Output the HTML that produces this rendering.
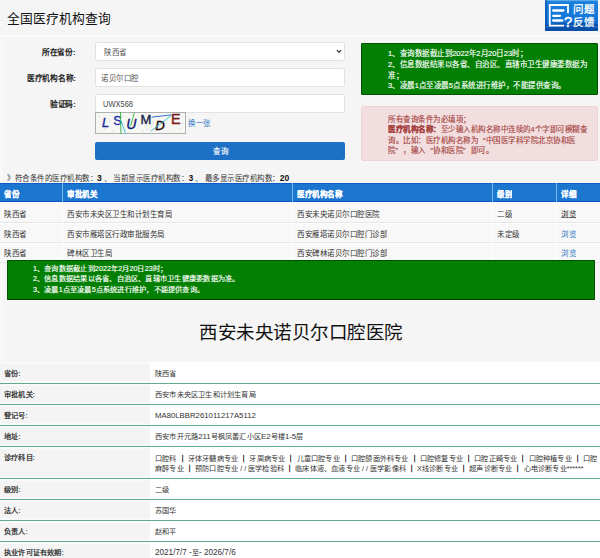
<!DOCTYPE html>
<html lang="zh-CN"><head><meta charset="utf-8">
<style>
*{box-sizing:border-box;margin:0;padding:0}
html,body{width:600px;height:558px;overflow:hidden;background:#f5f5f5;font-family:"Liberation Sans",sans-serif;color:#333}
.a{position:absolute;white-space:nowrap}
/* scaled text: 15px -> 7.5px */
.t{position:absolute;white-space:nowrap;font-size:15px;line-height:20px;transform:scale(.5);transform-origin:0 0}
.b{font-weight:bold}
.lbf{transform:scale(.515);color:#222}
.q{display:inline-block;width:15px}
#vl{left:1px;top:35px;width:1px;height:523px;background:#fdfdfd}
#hl{left:0;top:35px;width:600px;height:1px;background:#fdfdfd}
#fb{left:545px;top:0;width:53px;height:31px;background:linear-gradient(180deg,#1a80dc 0%,#1276d8 60%,#0c5cb8 100%);overflow:hidden}
.inp{position:absolute;left:95px;width:250px;height:19px;background:#fff;border:1px solid #e2e2e2;border-radius:2px}
#btn{left:95px;top:142px;width:250px;height:18px;background:#1e70c6;border-radius:2px}
.gbox{position:absolute;background:#038003;border:1px solid #025202;border-radius:1px}
#g1{left:361px;top:43px;width:237px;height:52px}
#p1{left:361px;top:106px;width:237px;height:55px;background:#f2dede;border:1px solid #eed3d7;border-radius:2px}
.w{color:#fff;-webkit-text-stroke:0.3px #fff}
.r{color:#a53f3d;-webkit-text-stroke:0.25px #a53f3d}
.th{position:absolute;top:183px;height:19px;background:#1b76d0;border-top:1px solid #0f5cc6;border-bottom:1px solid #0c52c2}
.tr{position:absolute;left:0;width:600px;height:20px;background:#f8f8f8;border-bottom:1px solid #e6e6e6;border-top:1px solid #fdfdfd}
.vd{position:absolute;width:1px;background:#fff}
.vdh{position:absolute;width:1px;background:#7fb8ec;top:183px;height:19px}
.lk{color:#2f76c4}
#g2{left:6.5px;top:260px;width:588.5px;height:40px;border-bottom:1px solid #013f01}
.row{position:absolute;left:0;width:600px;background:#fff;border-bottom:1px solid #62ab8c}
.rlb{position:absolute;left:0;width:150px;background:#f4f4f4;border-top:2px solid #f9f9f9;border-bottom:2px solid #f9f9f9}
.d{transform:scale(.48)}
.sep{color:#111;-webkit-text-stroke:0.8px #111}
.n{font-size:17px;color:#111}
.lat{font-size:16.2px}
.lb{color:#222;-webkit-text-stroke:0.45px #222}
.s2{transform:scale(.482)}
</style></head><body>
<div id="hl" class="a"></div>
<div id="vl" class="a"></div>
<div class="t" style="left:7px;top:9.5px;font-size:25.5px;line-height:34px;color:#111">全国医疗机构查询</div>
<div id="fb" class="a">
<svg width="53" height="31" viewBox="0 0 53 31" style="position:absolute;left:0;top:0">
<rect x="0" y="0" width="53" height="1.2" fill="#5aa8e8"/>
<rect x="0" y="0" width="2" height="31" fill="#0a50a8" opacity="0.6"/>
<path d="M0 25 Q22 21 53 24 L53 31 L0 31Z" fill="#0848a0" opacity="0.7"/>
<path d="M0 27 Q25 24 53 27" fill="none" stroke="#3a9ae8" stroke-width="0.8" opacity="0.7"/>
<path d="M19 25.7 L4.75 25.7 L4.75 5 L23 5 L23 13.2" fill="none" stroke="#fff" stroke-width="1.8"/>
<path d="M8.2 10.5 H18.4 M8.2 15.8 H15 M8.2 20.5 H17.2" stroke="#fff" stroke-width="2.3" stroke-linecap="round"/>
<text x="19" y="27" font-size="14.5" fill="#fff" stroke="#fff" stroke-width="0.4" font-family="Liberation Sans">?</text>
</svg>
<div class="t w" style="left:28px;top:3px;font-size:21px;line-height:24px;-webkit-text-stroke:0.6px #fff">问题</div>
<div class="t w" style="left:28px;top:16px;font-size:21px;line-height:24px;-webkit-text-stroke:0.6px #fff">反馈</div>
</div>

<div class="t b lbf" style="left:42px;top:46.5px">所在省份:</div>
<div class="t b lbf" style="left:26.5px;top:72.5px">医疗机构名称:</div>
<div class="t b lbf" style="left:50px;top:98.5px">验证码:</div>
<div class="inp" style="top:42px"><div class="t" style="left:8px;top:4px;color:#555">陕西省</div>
<svg class="a" style="left:240px;top:6px" width="6" height="5" viewBox="0 0 6 5"><path d="M0.8 1 L3 3.4 L5.2 1" fill="none" stroke="#222" stroke-width="1.1"/></svg></div>
<div class="inp" style="top:68px"><div class="t" style="left:5px;top:4px;color:#555">诺贝尔口腔</div></div>
<div class="inp" style="top:94px"><div class="t" style="left:6.5px;top:3px;color:#444;transform:scale(.5,.57)">UWX568</div></div>

<svg class="a" style="left:95px;top:112px" width="91" height="22" viewBox="0 0 91 22">
<rect x="0.5" y="0.5" width="90" height="21" fill="#f6f6f2" stroke="#b0b0b0"/>
<g fill="#9a9a9a">
<circle cx="4" cy="4" r=".45"/><circle cx="10" cy="17" r=".45"/><circle cx="22" cy="6" r=".45"/><circle cx="30" cy="18" r=".45"/><circle cx="37" cy="3" r=".45"/><circle cx="44" cy="13" r=".45"/><circle cx="52" cy="17" r=".45"/><circle cx="60" cy="4" r=".45"/><circle cx="66" cy="16" r=".45"/><circle cx="79" cy="7" r=".45"/><circle cx="86" cy="17" r=".45"/><circle cx="15" cy="9" r=".45"/><circle cx="72" cy="9" r=".45"/><circle cx="84" cy="3" r=".45"/><circle cx="6" cy="12" r=".45"/><circle cx="18" cy="19" r=".45"/><circle cx="48" cy="19" r=".45"/><circle cx="58" cy="11" r=".45"/><circle cx="88" cy="11" r=".45"/><circle cx="28" cy="4" r=".45"/>
</g>
<g font-family="Liberation Sans" stroke-width="0.35">
<text x="7" y="15.2" font-size="12.8" font-style="italic" fill="#1428a0" stroke="#1428a0">L</text>
<text x="18.3" y="12.6" font-size="12.8" fill="#1430a8" stroke="#1430a8">S</text>
<text x="31.2" y="17.1" font-size="14" font-style="italic" fill="#101e78" stroke="#101e78">U</text>
<text x="45.4" y="12.3" font-size="13" fill="#141c48" stroke="#141c48">M</text>
<text x="60.3" y="17.5" font-size="13.2" font-style="italic" fill="#1a0808" stroke="#1a0808">D</text>
<text x="76" y="12.3" font-size="14.5" fill="#7a1818" stroke="#7a1818">E</text>
</g>
<path d="M25.5 0 L25.9 22" stroke="#2fb040" stroke-width="0.9"/>
<path d="M25.9 8.5 L30.8 22" stroke="#30c0e0" stroke-width="0.9"/>
<path d="M39.4 0.5 L35.6 14" stroke="#2fb040" stroke-width="0.9"/>
<path d="M56.6 5.2 L76.6 2.8" stroke="#2860d8" stroke-width="0.9"/>
<path d="M55.8 19.2 L76.6 3.2" stroke="#30c0d8" stroke-width="0.9"/>
</svg>
<div class="t lk" style="left:188px;top:118px">换一张</div>
<div id="btn" class="a"></div>
<div class="t w" style="left:213px;top:146px">查询</div>

<div id="g1" class="gbox"></div>
<div class="t w" style="left:388px;top:48px">1、查询数据截止到2022年2月20日23时；</div>
<div class="t w" style="left:388px;top:59px">2、信息数据结果以各省、自治区、直辖市卫生健康委数据为</div>
<div class="t w" style="left:388px;top:70px">准；</div>
<div class="t w" style="left:388px;top:80px">3、凌晨1点至凌晨5点系统进行维护，不能提供查询。</div>
<div id="p1" class="a"></div>
<div class="t r" style="left:388px;top:114px">所有查询条件为必填项；</div>
<div class="t r" style="left:388px;top:124px"><b>医疗机构名称：</b>至少输入机构名称中连续的4个字即可模糊查</div>
<div class="t r" style="left:388px;top:135px">询。比如：医疗机构名称为<span class="q" style="text-align:right">“</span>中国医学科学院北京协和医</div>
<div class="t r" style="left:388px;top:145px">院<span class="q">”</span>，输入<span class="q" style="text-align:right">“</span>协和医院<span class="q">”</span>即可。</div>

<div class="t" style="left:7px;top:173px">》符合条件的医疗机构数：<b class="n">3</b> 、 当前显示医疗机构数：<b class="n">3</b> 、 最多显示医疗机构数：<b class="n">20</b></div>

<div class="th" style="left:0;width:600px"></div>
<div class="vdh" style="left:62px"></div><div class="vdh" style="left:292px"></div><div class="vdh" style="left:492px"></div><div class="vdh" style="left:556px"></div>
<div class="t b w" style="left:4px;top:188.8px">省份</div>
<div class="t b w" style="left:67px;top:188.8px">审批机关</div>
<div class="t b w" style="left:297px;top:188.8px">医疗机构名称</div>
<div class="t b w" style="left:497px;top:188.8px">级别</div>
<div class="t b w" style="left:561px;top:188.8px">详细</div>

<div class="tr" style="top:202px;height:21px"></div>
<div class="tr" style="top:223px;height:20px"></div>
<div class="tr" style="top:243px;height:20px"></div>
<div class="vd" style="left:62px;top:202px;height:60px"></div><div class="vd" style="left:292px;top:202px;height:60px"></div><div class="vd" style="left:492px;top:202px;height:60px"></div><div class="vd" style="left:556px;top:202px;height:60px"></div>
<div class="t" style="left:4px;top:208.8px">陕西省</div><div class="t" style="left:67px;top:208.8px">西安市未央区卫生和计划生育局</div><div class="t" style="left:297px;top:208.8px">西安未央诺贝尔口腔医院</div><div class="t" style="left:497px;top:208.8px">二级</div><div class="t" style="left:561px;top:208.8px;color:#222;text-decoration:underline">浏览</div>
<div class="t" style="left:4px;top:228.6px">陕西省</div><div class="t" style="left:67px;top:228.6px">西安市雁塔区行政审批服务局</div><div class="t" style="left:297px;top:228.6px">西安雁塔诺贝尔口腔门诊部</div><div class="t" style="left:497px;top:228.6px">未定级</div><div class="t lk" style="left:561px;top:228.6px">浏览</div>
<div class="t" style="left:4px;top:248px">陕西省</div><div class="t" style="left:67px;top:248px">碑林区卫生局</div><div class="t" style="left:297px;top:248px">西安碑林诺贝尔口腔门诊部</div><div class="t lk" style="left:561px;top:248px">浏览</div>

<div id="g2" class="gbox"></div>
<div class="t w s2" style="left:33px;top:264px">1、查询数据截止到2022年2月20日23时；</div>
<div class="t w s2" style="left:33px;top:274px">2、信息数据结果以各省、自治区、直辖市卫生健康委数据为准。</div>
<div class="t w s2" style="left:33px;top:285px">3、凌晨1点至凌晨5点系统进行维护，不能提供查询。</div>

<div class="t" style="left:199px;top:321px;font-size:37px;line-height:48px;color:#111">西安未央诺贝尔口腔医院</div>

<div class="row" style="top:362px;height:22px"><div class="rlb" style="top:0;bottom:0"></div></div>
<div class="row" style="top:384px;height:21px"><div class="rlb" style="top:0;bottom:0"></div></div>
<div class="row" style="top:405px;height:21px"><div class="rlb" style="top:0;bottom:0"></div></div>
<div class="row" style="top:426px;height:21px"><div class="rlb" style="top:0;bottom:0"></div></div>
<div class="row" style="top:447px;height:32px"><div class="rlb" style="top:0;bottom:0"></div></div>
<div class="row" style="top:479px;height:21px"><div class="rlb" style="top:0;bottom:0"></div></div>
<div class="row" style="top:500px;height:21px"><div class="rlb" style="top:0;bottom:0"></div></div>
<div class="row" style="top:521px;height:21px"><div class="rlb" style="top:0;bottom:0"></div></div>
<div class="row" style="top:542px;height:22px;border-bottom:none"><div class="rlb" style="top:0;bottom:0"></div></div>

<div class="t d lb" style="left:4px;top:369px">省份:</div><div class="t d" style="left:155px;top:369px">陕西省</div>
<div class="t d lb" style="left:4px;top:390px">审批机关:</div><div class="t d" style="left:155px;top:390px">西安市未央区卫生和计划生育局</div>
<div class="t d lb" style="left:4px;top:411px">登记号:</div><div class="t d" style="left:155px;top:410px"><span class="lat">MA80LBBR261011217A5112</span></div>
<div class="t d lb" style="left:4px;top:432px">地址:</div><div class="t d" style="left:155px;top:431px">西安市开元路<span class="lat">211</span>号枫凤善汇小区<span class="lat">E2</span>号楼<span class="lat">1-5</span>层</div>
<div class="t d lb" style="left:4px;top:453px">诊疗科目:</div>
<div class="t d" style="left:155px;top:454px">口腔科 <span class="sep">｜</span> 牙体牙髓病专业 <span class="sep">｜</span> 牙周病专业 <span class="sep">｜</span> 儿童口腔专业 <span class="sep">｜</span> 口腔颌面外科专业 <span class="sep">｜</span> 口腔修复专业 <span class="sep">｜</span> 口腔正畸专业 <span class="sep">｜</span> 口腔种植专业 <span class="sep">｜</span> 口腔</div>
<div class="t d" style="left:155px;top:464px">麻醉专业 <span class="sep">｜</span> 预防口腔专业 <span style="letter-spacing:4px">//</span>医学检验科 <span class="sep">｜</span> 临床体液、血液专业 <span style="letter-spacing:4px">//</span>医学影像科 <span class="sep">｜</span> X线诊断专业 <span class="sep">｜</span> 超声诊断专业 <span class="sep">｜</span> 心电诊断专业******</div>
<div class="t d lb" style="left:4px;top:485px">级别:</div><div class="t d" style="left:155px;top:485px">二级</div>
<div class="t d lb" style="left:4px;top:506px">法人:</div><div class="t d" style="left:155px;top:506px">苏国华</div>
<div class="t d lb" style="left:4px;top:527px">负责人:</div><div class="t d" style="left:155px;top:527px">赵和平</div>
<div class="t d lb" style="left:4px;top:548px">执业许可证有效期:</div><div class="t d" style="left:155px;top:548px"><span class="lat" style="font-size:17px">2021/7/7 -</span>至<span class="lat" style="font-size:17px">- 2026/7/6</span></div>
</body></html>
